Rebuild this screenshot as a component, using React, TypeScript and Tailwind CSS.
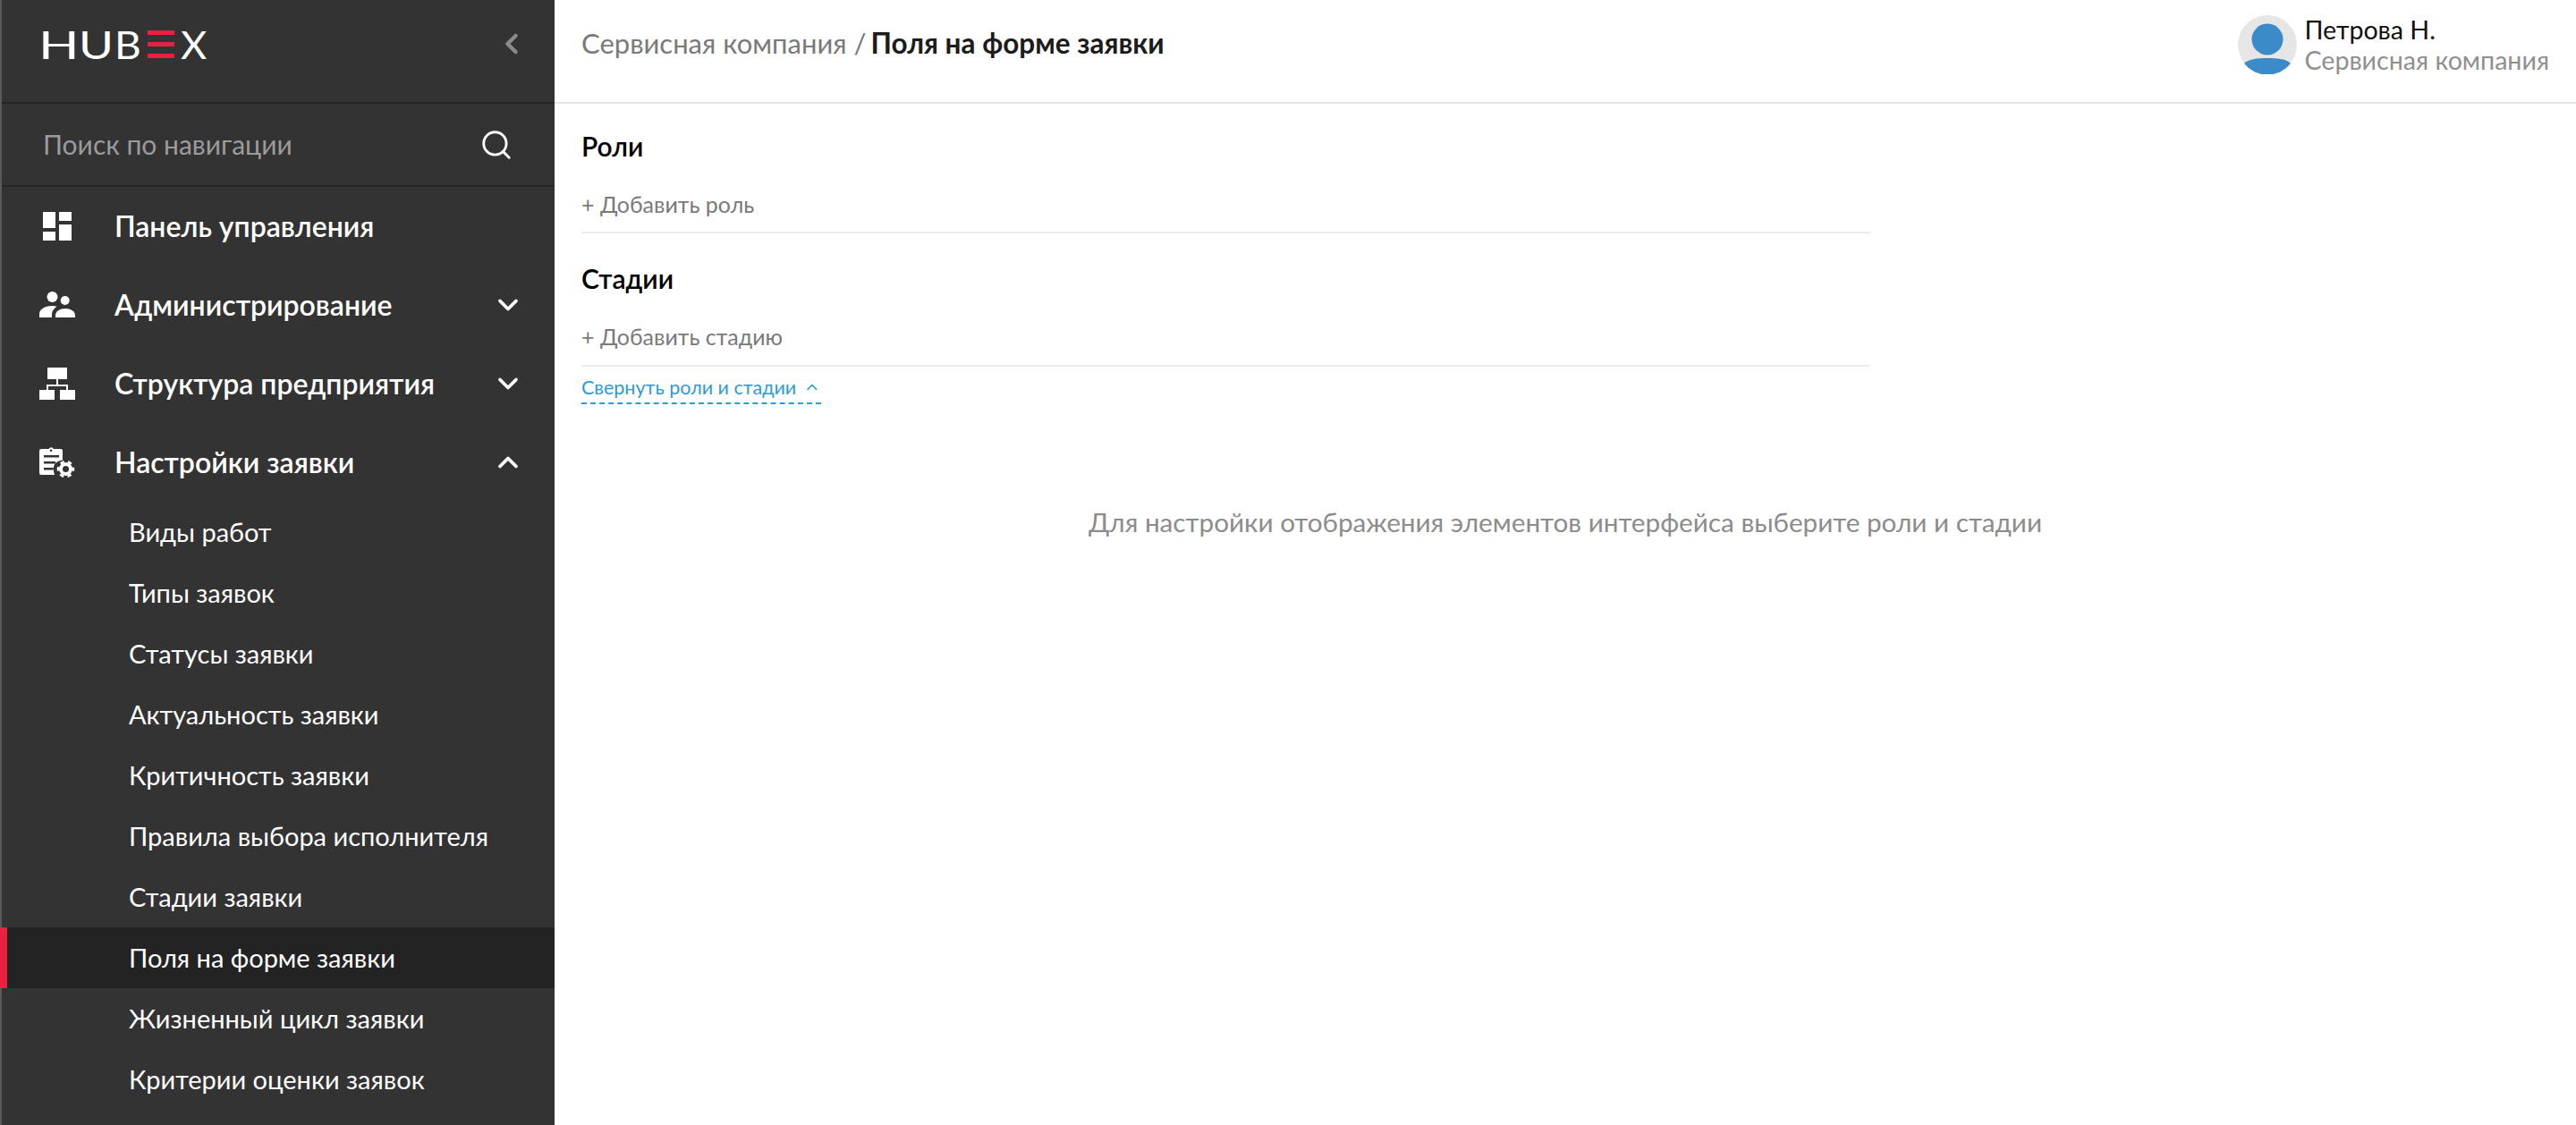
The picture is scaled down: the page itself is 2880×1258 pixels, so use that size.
import { ChevronDown, ChevronLeft, ChevronUp, Search } from "lucide-react";

const subItems = [
  "Виды работ",
  "Типы заявок",
  "Статусы заявки",
  "Актуальность заявки",
  "Критичность заявки",
  "Правила выбора исполнителя",
  "Стадии заявки",
  "Поля на форме заявки",
  "Жизненный цикл заявки",
  "Критерии оценки заявок",
];

function DashboardIcon() {
  return (
    <svg width="32" height="32" viewBox="0 0 32 32" fill="currentColor">
      <rect x="0" y="0" width="14" height="18" />
      <rect x="0" y="22" width="14" height="10" />
      <rect x="18" y="0" width="14" height="10" />
      <rect x="18" y="14" width="14" height="18" />
    </svg>
  );
}

function PeopleIcon() {
  return (
    <svg width="40" height="30" viewBox="0 0 40 30" fill="currentColor">
      <circle cx="14.5" cy="6" r="6" />
      <circle cx="28.7" cy="10" r="5" />
      <path d="M0 29v-4c0-5 6-9 14-9 2 0 4 .3 5.500 .8-3 2-5.500 5-5.500 8.200v4z" />
      <path d="M18 29v-2c0-5 5-8 11-8s11 3 11 8v2z" />
    </svg>
  );
}

function OrgIcon() {
  return (
    <svg width="40" height="36" viewBox="0 0 40 36" fill="currentColor">
      <rect x="9" y="0" width="22" height="13" />
      <rect x="0" y="25" width="17" height="11" />
      <rect x="23" y="25" width="17" height="11" />
      <path d="M19 13h2v6h11v6h-2v-4H10v4H8v-6h11z" />
    </svg>
  );
}

function ClipboardGearIcon() {
  return (
    <svg width="40" height="36" viewBox="0 0 40 36" fill="currentColor">
      <path
        fillRule="evenodd"
        d="M2 3h8.500a3 3 0 0 1 5.500 0h8a2 2 0 0 1 2 2v10.500c-5 .5-9 3-10 7.500-.5 3 0 6 1 9H2a2 2 0 0 1-2-2V5a2 2 0 0 1 2-2zm11 .5a1.300 1.300 0 1 0 0 2.600 1.300 1.300 0 0 0 0-2.600zM5 10v2.500h17V10zm0 7v2.500h13V17zm0 7v2.500h11V24z"
      />
      <circle cx="29.500" cy="25.500" r="5.500" fill="none" stroke="currentColor" strokeWidth="4" />
      <circle
        cx="29.500"
        cy="25.500"
        r="8.500"
        fill="none"
        stroke="currentColor"
        strokeWidth="2.500"
        strokeDasharray="4.500 4.400"
        strokeDashoffset="2.200"
      />
    </svg>
  );
}

function NavRow({
  icon,
  label,
  chevron,
}: {
  icon: React.ReactNode;
  label: string;
  chevron?: "up" | "down";
}) {
  return (
    <div className="flex h-[88px] items-center">
      <div className="flex w-[126px] shrink-0 items-center justify-center pr-[2px] text-white">{icon}</div>
      <span className="text-[32px] font-semibold text-white">{label}</span>
      {chevron === "down" && (
        <ChevronDown className="ml-auto mr-[34px] h-[36px] w-[36px] text-white" strokeWidth={2.5} />
      )}
      {chevron === "up" && <ChevronUp className="ml-auto mr-[34px] h-[36px] w-[36px] text-white" strokeWidth={2.5} />}
    </div>
  );
}

export default function App() {
  return (
    <div className="flex h-[1258px] overflow-hidden bg-white font-['Lato','Open_Sans',sans-serif]">
      {/* Sidebar */}
      <aside className="flex w-[620px] shrink-0 flex-col border-l-2 border-[#5a5a5a] bg-[#333333]">
        <div className="flex h-[116px] shrink-0 items-center border-b-2 border-[#252525] pb-[16px] pl-[46px] pr-[30px]">
          <div className="flex h-[31px] items-center text-white">
            <span className="-ml-[5.5px] w-[45px] origin-left scale-x-[1.39] text-[43px] leading-none">H</span>
            <span className="w-[40px] origin-left scale-x-[1.23] text-[43px] leading-none">U</span>
            <span className="w-[37px] origin-left scale-x-[1.07] text-[43px] leading-none">B</span>
            <div className="flex h-[31px] w-[37px] flex-col justify-between pr-[7px]">
              <div className="h-[5px] bg-[#e9203f]" />
              <div className="h-[5px] bg-[#e9203f]" />
              <div className="h-[5px] bg-[#e9203f]" />
            </div>
            <span className="origin-left scale-x-[1.05] text-[43px] leading-none">X</span>
          </div>
          <ChevronLeft className="ml-auto h-[36px] w-[36px] text-[#8a8a8a]" strokeWidth={3} />
        </div>

        <div className="flex h-[93px] shrink-0 items-center border-b-2 border-[#252525] pl-[46px] pr-[46px]">
          <span className="text-[30px] text-[#9b9b9b]">Поиск по навигации</span>
          <Search className="ml-auto h-[38px] w-[38px] text-white" strokeWidth={1.8} />
        </div>

        <nav className="flex flex-col">
          <NavRow icon={<DashboardIcon />} label="Панель управления" />
          <NavRow icon={<PeopleIcon />} label="Администрирование" chevron="down" />
          <NavRow icon={<OrgIcon />} label="Структура предприятия" chevron="down" />
          <NavRow icon={<ClipboardGearIcon />} label="Настройки заявки" chevron="up" />
          <div className="flex flex-col">
            {subItems.map((item) =>
              item === "Поля на форме заявки" ? (
                <div
                  key={item}
                  className="-ml-[2px] flex h-[68px] shrink-0 items-center border-l-[8px] border-[#e9203f] bg-[#232323] pl-[136px] text-[29px] text-white"
                >
                  {item}
                </div>
              ) : (
                <div key={item} className="flex h-[68px] shrink-0 items-center pl-[142px] text-[29px] text-white">
                  {item}
                </div>
              )
            )}
          </div>
        </nav>
      </aside>

      {/* Main */}
      <main className="flex min-w-0 flex-1 flex-col">
        <header className="flex h-[116px] shrink-0 items-center border-b-2 border-[#e6e6e6] pb-[16px] pl-[30px] pr-[30px]">
          <div className="text-[31px] text-[#7a7a7a]">
            Сервисная компания /{" "}
            <span className="-ml-[3px] text-[31.5px] font-bold text-[#1c1c1c]">Поля на форме заявки</span>
          </div>
          <div className="ml-auto mt-[2px] flex items-center gap-[8px]">
            <svg width="66" height="66" viewBox="0 0 66 66">
              <circle cx="33" cy="33" r="33" fill="#e6e6e6" />
              <circle cx="33" cy="27" r="17.500" fill="#3b8bc9" />
              <path d="M7 54c5-5 14-6 26-6s21 1 26 6a33 33 0 0 1-52 0z" fill="#3b8bc9" />
            </svg>
            <div className="flex flex-col">
              <span className="text-[28.6px] leading-[34px] text-[#111111]">Петрова Н.</span>
              <span className="text-[28.6px] leading-[34px] text-[#8f8f8f]">Сервисная компания</span>
            </div>
          </div>
        </header>

        <div className="flex w-[1471px] flex-col pl-[30px] pt-[27px]">
          <h2 className="text-[30px] leading-[40px] font-semibold text-black">Роли</h2>
          <div className="mt-[25px] flex h-[53px] items-start border-b-2 border-[#ececec] text-[25px] leading-[40px] text-[#7a7a7a]">
            + Добавить роль
          </div>
          <h2 className="mt-[30px] text-[30px] leading-[40px] font-semibold text-black">Стадии</h2>
          <div className="mt-[25px] flex h-[54px] items-start border-b-2 border-[#ececec] text-[25px] leading-[40px] text-[#7a7a7a]">
            + Добавить стадию
          </div>
          <div className="flex h-[42px] w-[268px] items-center gap-[8px] whitespace-nowrap border-b-2 border-dashed border-[#2f9bd3] pt-[6px] text-[21.5px] text-[#2f9bd3]">
            Свернуть роли и стадии
            <ChevronUp className="h-[20px] w-[20px]" strokeWidth={2} />
          </div>
        </div>

        <p className="mt-[110px] text-center text-[29.7px] text-[#8c8c8c]">
          Для настройки отображения элементов интерфейса выберите роли и стадии
        </p>
      </main>
    </div>
  );
}
